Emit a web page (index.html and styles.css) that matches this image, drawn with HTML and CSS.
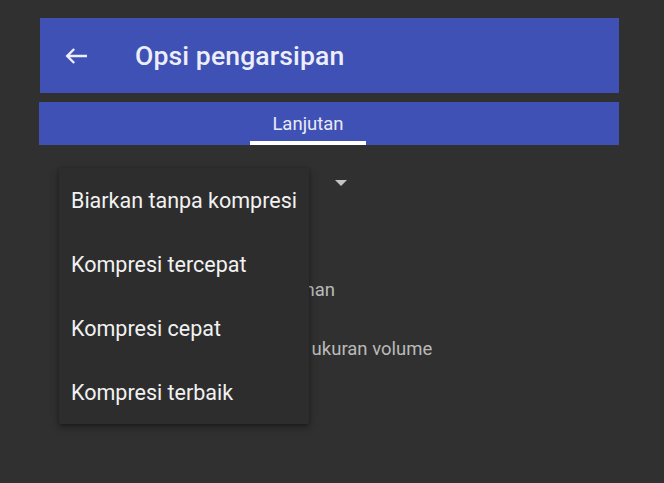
FILE: index.html
```html
<!DOCTYPE html>
<html lang="id">
<head>
<meta charset="utf-8">
<title>Opsi pengarsipan</title>
<link rel="stylesheet" href="styles.css">
</head>
<body>
<div class="screen">
  <header class="appbar">
    <svg class="back" viewBox="0 0 22 16" width="22" height="16" aria-hidden="true">
      <path d="M22 8H2.2M9.2 1L2.2 8L9.2 15" fill="none" stroke="#eceefa" stroke-width="2.4"/>
    </svg>
    <h1 class="title">Opsi pengarsipan</h1>
  </header>
  <nav class="tabs">
    <div class="tab active">Lanjutan</div>
  </nav>
  <main class="content">
    <div class="spinner">
      <span class="caret"></span>
    </div>
    <div class="check-row">
      <span class="box"></span>
      <span class="label">Simpan atribut keamanan</span>
    </div>
    <div class="check-row">
      <span class="box"></span>
      <span class="label">Bagi ke volume sesuai ukuran volume</span>
    </div>
  </main>
  <ul class="menu">
    <li class="menu-item">Biarkan tanpa kompresi</li>
    <li class="menu-item">Kompresi tercepat</li>
    <li class="menu-item">Kompresi cepat</li>
    <li class="menu-item">Kompresi terbaik</li>
  </ul>
</div>
</body>
</html>
```
FILE: styles.css
```css
html, body {
  margin: 0;
  padding: 0;
  background: #303030;
}
body {
  font-family: Roboto, "Noto Sans", sans-serif;
  width: 664px;
  height: 483px;
  overflow: hidden;
}
.screen {
  position: relative;
  width: 579px;
  padding: 18px 0 0 40px;
}
.appbar {
  height: 75px;
  background: #3f51b5;
  display: flex;
  align-items: center;
  padding-left: 25px;
  box-sizing: border-box;
}
.back {
  display: block;
  margin-right: 48px;
  flex: none;
}
.title {
  margin: 0;
  font-size: 26.6px;
  font-weight: 500;
  color: #eceefa;
  letter-spacing: 0.1px;
}
.tabs {
  margin-top: 9px;
  margin-left: -1px;
  height: 43px;
  background: #3f51b5;
  display: flex;
  padding-left: 211px;
}
.tab {
  width: 116px;
  box-sizing: border-box;
  height: 43px;
  padding-top: 11px;
  text-align: center;
  font-size: 18.5px;
  line-height: 22px;
  color: #e8eaf6;
}
.tab.active {
  border-bottom: 4px solid #ffffff;
}
.content {
  padding-left: 31px;
}
.spinner {
  margin-top: 18px;
  height: 40px;
  width: 276px;
  display: flex;
  align-items: center;
  justify-content: flex-end;
}
.caret {
  width: 0;
  height: 0;
  border-left: 6.5px solid transparent;
  border-right: 6.5px solid transparent;
  border-top: 6px solid #c4c4c4;
}
.check-row {
  display: flex;
  align-items: center;
  height: 59px;
  font-size: 18.5px;
  color: #bababa;
}
.spinner + .check-row {
  margin-top: 57px;
}
.box {
  width: 18px;
  height: 18px;
  box-sizing: border-box;
  border: 2px solid #bababa;
  border-radius: 2px;
  margin-right: 35px;
  flex: none;
}
.menu {
  position: absolute;
  left: 59px;
  top: 168px;
  width: 250px;
  margin: 0;
  padding: 0;
  list-style: none;
  background: #2d2d2d;
  border-radius: 2px;
  box-shadow: 0 3px 8px rgba(0, 0, 0, 0.35), 0 1px 3px rgba(0, 0, 0, 0.25);
}
.menu-item {
  height: 64px;
  display: flex;
  align-items: center;
  padding-left: 12px;
  font-size: 21.5px;
  color: #f2f2f2;
  white-space: nowrap;
}
```
